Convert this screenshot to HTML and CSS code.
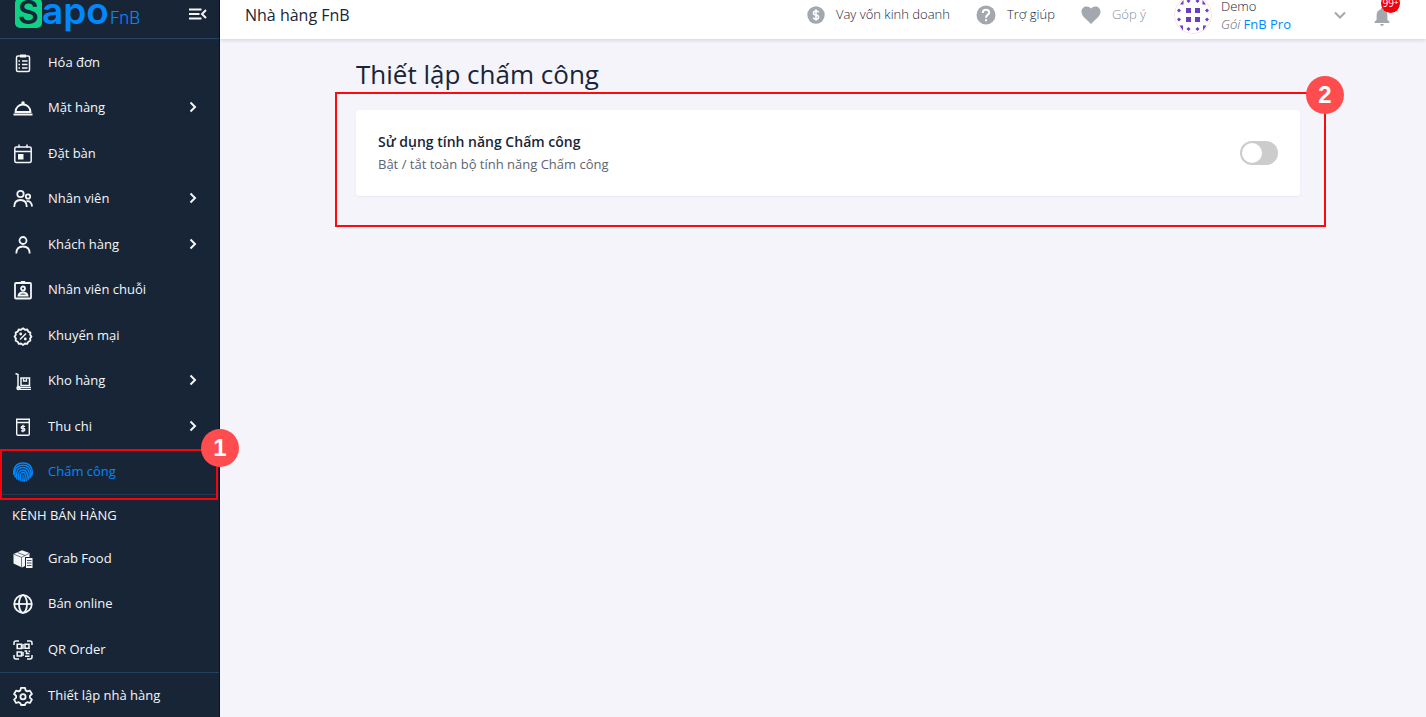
FILE: index.html
```html
<!DOCTYPE html>
<html lang="vi">

<head>
    <meta charset="UTF-8">
    <title>Thiết lập chấm công</title>
    <link rel="stylesheet" href="styles.css">
</head>

<body>

    <aside class="sidebar">
        <div class="brand">
            <a href="#" class="logo"><span class="logo-s">S</span><span class="logo-apo">apo</span><span class="logo-fnb">FnB</span></a>
            <button class="collapse" aria-label="Menu">
                <svg width="18" height="14" viewBox="0 0 18 14" fill="none" stroke="currentColor" stroke-width="2"><path d="M0 2.5h12.5M0 7h10.5M0 11.5h12.5M17 3l-4 4 4 4"/></svg>
            </button>
        </div>

        <nav class="menu">
            <a href="#" class="item">
                <svg class="icon" viewBox="0 0 20 20"><rect x="3.5" y="3" width="13" height="15.5" rx="1.5" stroke-width="1.5"/><path class="solid" d="M7 1.5h6v3H7z"/><path d="M9 8h5.500M9 11.500h5.500M9 15h5.500M5.500 8h1.500M5.500 11.500h1.500M5.500 15h1.500" stroke-width="1.300"/></svg>
                <span>Hóa đơn</span>
            </a>
            <a href="#" class="item">
                <svg class="icon" viewBox="0 0 20 20"><path d="M2.500 14a7.500 7.500 0 0 1 15 0z"/><path class="solid" d="M.5 15.500h19v2H.5z"/><circle class="solid" cx="10" cy="5" r="1.800"/></svg>
                <span>Mặt hàng</span>
                <svg class="arrow" viewBox="0 0 8 12"><path d="M1.500 1.500L6 6l-4.500 4.500"/></svg>
            </a>
            <a href="#" class="item">
                <svg class="icon" viewBox="0 0 20 20"><rect x="1.800" y="3" width="16.400" height="15.500" rx="1.500" stroke-width="1.500"/><path d="M2 7.500h16M6 .5v3M14 .5v3" stroke-width="1.500"/><path class="solid" d="M5 10h5.500v5.500H5z"/></svg>
                <span>Đặt bàn</span>
            </a>
            <a href="#" class="item">
                <svg class="icon" viewBox="0 0 20 20"><circle cx="7.500" cy="5" r="3.200"/><path d="M1.200 18c0-4.500 2.500-7 6.300-7s6.300 2.500 6.300 7"/><circle cx="15" cy="7.500" r="2.200"/><path d="M13.500 12.200c3.500-.5 5.300 1.800 5.500 5.300"/></svg>
                <span>Nhân viên</span>
                <svg class="arrow" viewBox="0 0 8 12"><path d="M1.500 1.500L6 6l-4.500 4.500"/></svg>
            </a>
            <a href="#" class="item">
                <svg class="icon" viewBox="0 0 20 20"><circle cx="10" cy="5.500" r="3.500"/><path d="M3.300 18.500c0-4.500 2.700-7 6.700-7s6.700 2.500 6.700 7"/></svg>
                <span>Khách hàng</span>
                <svg class="arrow" viewBox="0 0 8 12"><path d="M1.500 1.500L6 6l-4.500 4.500"/></svg>
            </a>
            <a href="#" class="item">
                <svg class="icon" viewBox="0 0 20 20"><rect x="2" y="3" width="16" height="15.500" rx="1"/><path class="solid" d="M7 3l1-2h4l1 2z"/><circle cx="10" cy="8.500" r="2"/><path d="M5.500 15.500c.5-2 2-3 4.500-3s4 1 4.500 3z"/></svg>
                <span>Nhân viên chuỗi</span>
            </a>
            <a href="#" class="item">
                <svg class="icon" viewBox="0 0 20 20"><path d="M10 2.300l2 1.500 2.300-.3 1 2.100 2.100 1-.3 2.200 1.400 1.700-1.400 1.900.3 2.300-2.100 1-1 2.100-2.300-.3-2 1.400-2-1.400-2.300.3-1-2.100-2.100-1 .3-2.300L1.500 10.500l1.400-1.700-.3-2.200 2.100-1 1-2.100 2.300.3z" stroke-linejoin="round"/><path d="M7 13.500l6-6" stroke-width="1.500"/><circle class="solid" cx="7.700" cy="8" r="1.400"/><circle class="solid" cx="12.300" cy="13" r="1.400"/></svg>
                <span>Khuyến mại</span>
            </a>
            <a href="#" class="item">
                <svg class="icon" viewBox="0 0 20 20"><path d="M2.500 2.500l2.500 1v13h13" stroke-width="1.500"/><rect x="8" y="7" width="8.500" height="7.500" stroke-width="1.500"/><path d="M10.500 7.500v2.500h3V7.500" stroke-width="1.300"/><circle cx="5.500" cy="17" r="1.300"/><path d="M7 18.500h11" stroke-width="1"/></svg>
                <span>Kho hàng</span>
                <svg class="arrow" viewBox="0 0 8 12"><path d="M1.500 1.500L6 6l-4.500 4.500"/></svg>
            </a>
            <a href="#" class="item">
                <svg class="icon" viewBox="0 0 20 20"><path d="M3.700 5.500v11.500q0 1.300 1.300 1.300h10q1.300 0 1.300-1.300V5.500M3.500 5.500h13M3.700 5.500V2.200h12.600v3.300" stroke-width="1.400"/><path d="M12 9.300H9.200q-1 0-1 1.100t1 1.100h1.600q1 0 1 1.200t-1 1.200H8M10 7.800v7.500" stroke-width="1.300"/></svg>
                <span>Thu chi</span>
                <svg class="arrow" viewBox="0 0 8 12"><path d="M1.500 1.500L6 6l-4.500 4.500"/></svg>
            </a>
            <a href="#" class="item active">
                <svg class="icon" viewBox="0 0 20 20" stroke-linecap="round"><path stroke-width="1.400" d="M1 12.500C-.5 5 4 1 10 1s10.500 4 9 12M2.300 15c-2-7 1.500-11.800 7.700-11.800s9 4.300 7.500 12M4 17C2.500 10 4.500 5.500 10 5.500S17.300 10 15.500 17M6 18C4.500 11.500 6 8 10 8s5.300 4.500 3.500 10.500M8 19c-1-5-1-8.500 2-8.500s2.500 4 1.500 8.500M10 13v6"/></svg>
                <span>Chấm công</span>
                <i class="mark"></i>
                <b class="step step-one">1</b>
            </a>
            <h2 class="group">KÊNH BÁN HÀNG</h2>
            <a href="#" class="item">
                <svg class="icon" viewBox="0 0 20 20"><path class="solid" d="M.5 5L9 1.200 16.500 4v4H12v9l-3 1.500-8.500-4z"/><path d="M1 5.300l7.500 3 7.500-3.800M8.500 8.500v10M4.500 3.500L12 6.500" stroke="#182537" stroke-width=".6"/><path class="solid" d="M13 9h6.500v10H13z"/><path d="M14 11.500h4.500M14 14h4.500M14 16.500h4.500" stroke="#182537" stroke-width=".8"/></svg>
                <span>Grab Food</span>
            </a>
            <a href="#" class="item">
                <svg class="icon" viewBox="0 0 20 20"><circle cx="10" cy="10" r="8.800"/><ellipse cx="10" cy="10" rx="4" ry="8.800"/><path d="M1.200 10h17.600"/></svg>
                <span>Bán online</span>
            </a>
            <a href="#" class="item">
                <svg class="icon" viewBox="0 0 20 20"><path d="M1 5V3q0-2 2-2h3M14 1h3q2 0 2 2v2M1 15v2q0 2 2 2h3M14 19h3q2 0 2-2v-2" stroke-width="1.500"/><path d="M4.200 4.200h4.300v4.300H4.200zM12 4.200h4v4h-4zM4.200 12h4.300v4H4.200z" stroke-width="1.600"/><path d="M11.500 11h2v2.500h3M12 16.200h4.500M16.300 10.500v1.500M10 4v5M10 12v4" stroke-width="1.500"/></svg>
                <span>QR Order</span>
            </a>
            <a href="#" class="item settings">
                <svg class="icon" viewBox="0 0 20 20"><path stroke-linejoin="round" d="M8 1.800h4l.6 2.600 1.700 1 2.600-.8 2 3.400-2 1.900v1.800l2 1.900-2 3.400-2.600-.8-1.700 1-.6 1.800H8l-.6-1.800-1.700-1-2.600.8-2-3.400 2-1.900V9.900l-2-1.900 2-3.400 2.600.8 1.700-1z"/><circle cx="10" cy="10.700" r="2.600"/></svg>
                <span>Thiết lập nhà hàng</span>
            </a>
        </nav>
    </aside>

    <div class="page">
        <header class="topbar">
            <div class="store">Nhà hàng FnB</div>
            <a href="#" class="link">
                <svg width="18" height="18" viewBox="0 0 18 18"><circle cx="9" cy="9" r="8.700" fill="#a3a8af"/><path d="M11.800 6.300Q11 5 9 5 6.500 5 6.500 6.900T9 9t2.600 2.100T9 13q-2 0-2.900-1.300M9 3.300v11.400" fill="none" stroke="#fff" stroke-width="1.600"/></svg>
                <span>Vay vốn kinh doanh</span>
            </a>
            <a href="#" class="link">
                <svg width="20" height="20" viewBox="0 0 20 20"><circle cx="10" cy="10" r="9.500" fill="#a3a8af"/><path d="M6.800 8q0-3.300 3.200-3.300T13.200 7.500q0 1.200-1.600 2.400T10 12.700" fill="none" stroke="#fff" stroke-width="2"/><path d="M9 14.200h2v2H9z" fill="#fff"/></svg>
                <span>Trợ giúp</span>
            </a>
            <a href="#" class="link muted">
                <svg width="20" height="18" viewBox="0 0 20 18"><path d="M10 18L8.500 16.600C3.500 12 .5 9.300.5 5.600.5 2.600 2.800.5 5.600.5 7.300.5 9 1.300 10 2.600 11 1.300 12.700.5 14.400.5c2.800 0 5.100 2.100 5.100 5.100 0 3.700-3 6.400-8 11z" fill="#a3a8af"/></svg>
                <span>Góp ý</span>
            </a>
            <div class="account">
                <svg class="avatar" viewBox="0 0 38 38" fill="#6a3fbf">
                    <circle cx="19" cy="19" r="18.500" fill="#fff" stroke="#fbe3e6"/>
                    <path d="M12 12h5v5h-5zM21 12h5v5h-5zM12 21h5v5h-5zM21 21h5v5h-5z"/>
                    <path d="M5 12.500l2 2-2 2-2-2zM33 12.500l2 2-2 2-2-2zM5 21.500l2 2-2 2-2-2zM33 21.500l2 2-2 2-2-2zM14.500 3l2 2-2 2-2-2zM23.500 3l2 2-2 2-2-2zM14.500 31l2 2-2 2-2-2zM23.500 31l2 2-2 2-2-2z"/>
                    <path d="M6 8.500L9.500 4v4.500zM32 8.500L28.500 4v4.500zM5.500 29.500H9v5zM32.500 29.500H29v5z"/>
                </svg>
                <div class="who">
                    <div>Demo</div>
                    <div><em>Gói</em> <a href="#">FnB Pro</a></div>
                </div>
                <svg class="caret" width="12" height="8" viewBox="0 0 12 8"><path d="M1 1.500l5 5 5-5" fill="none" stroke="#a3a8af" stroke-width="2"/></svg>
            </div>
            <button class="bell" aria-label="Thông báo">
                <svg width="16" height="18" viewBox="0 0 16 18" fill="#a3a8af"><path d="M8 0c.9 0 1.400.6 1.400 1.600 2.600.7 4 2.800 4 5.600v4.500l2 2V15H.6v-1.300l2-2V7.200c0-2.800 1.400-4.900 4-5.600C6.600.6 7.100 0 8 0zM6.200 16h3.600q-.3 2-1.800 2t-1.800-2z"/></svg>
                <span class="count">99<sup>+</sup></span>
            </button>
        </header>

        <main class="content">
            <h1>Thiết lập chấm công</h1>
            <section class="frame">
                <div class="card">
                    <label for="timekeeping">
                        <strong>Sử dụng tính năng Chấm công</strong>
                        <small>Bật / tắt toàn bộ tính năng Chấm công</small>
                    </label>
                    <input type="checkbox" id="timekeeping" class="switch">
                </div>
                <b class="step step-two">2</b>
            </section>
        </main>
    </div>

</body>

</html>
```
FILE: styles.css
```css
* {
    box-sizing: border-box;
}

body {
    margin: 0;
    display: flex;
    min-height: 100vh;
    font-family: "Open Sans", "Noto Sans", sans-serif;
    font-size: 13px;
    color: #182537;
    background-color: #f4f4fa;
}

a {
    color: inherit;
    text-decoration: none;
}

button {
    padding: 0;
    border: none;
    background: none;
    color: inherit;
    cursor: pointer;
}

svg {
    display: block;
    flex: none;
}

/* Sidebar */
.sidebar {
    flex: none;
    width: 220px;
    display: flex;
    flex-direction: column;
    color: #f4f6f8;
    background-color: #182537;
    border-right: 1px solid #0a1224;
}

.brand {
    display: flex;
    align-items: center;
    justify-content: space-between;
    height: 39px;
    padding: 0 12px 10px 15px;
    border-bottom: 1px solid #2a4365;
}

.logo {
    display: flex;
    align-items: baseline;
    font-family: Inter, sans-serif;
    color: #0088ff;
    line-height: 30px;
}

.logo-s {
    width: 27px;
    border-radius: 5px;
    text-align: center;
    font-size: 32px;
    font-weight: 600;
    line-height: 30px;
    color: #182537;
    background-color: #0fd186;
}

.logo-apo {
    font-size: 37px;
    font-weight: 600;
}

.logo-fnb {
    margin-left: 1px;
    font-size: 17px;
    font-weight: 300;
}

.menu {
    flex: 1;
    display: flex;
    flex-direction: column;
}

.item {
    position: relative;
    flex: 1 0 32px;
    display: flex;
    align-items: center;
    gap: 15px;
    padding: 0 22px 0 13px;
}

.icon {
    width: 20px;
    height: 20px;
    margin-top: 2px;
    fill: none;
    stroke: currentColor;
    stroke-width: 1.8;
}

.icon .solid {
    fill: currentColor;
    stroke: none;
}

.arrow {
    width: 8px;
    height: 12px;
    margin-left: auto;
    fill: none;
    stroke: currentColor;
    stroke-width: 2;
}

.active {
    color: #0088ff;
}

.group {
    margin: 0;
    padding-left: 12px;
    border-top: 1px solid #26384f;
    font-size: 13px;
    font-weight: 400;
    line-height: 40px;
}

.settings {
    border-top: 1px solid #24405f;
}

/* Numbered guide marks */
.mark {
    position: absolute;
    inset: 0 1px -6px 0;
    border: 2px solid #f5040c;
}

.step {
    position: absolute;
    z-index: 1;
    width: 38px;
    height: 38px;
    border-radius: 50%;
    text-align: center;
    font: bold 24px/38px "Liberation Sans", sans-serif;
    color: #fff;
    background-color: #ff4d4f;
}

.step-one {
    top: -20px;
    right: -20px;
}

.step-two {
    top: -18px;
    right: -20px;
}

/* Top bar */
.page {
    flex: 1;
    min-width: 0;
}

.topbar {
    display: flex;
    align-items: center;
    height: 39px;
    padding: 0 36px 9px 25px;
    background-color: #fff;
    box-shadow: 0 1px 4px rgba(0, 0, 0, 0.15);
}

.store {
    margin-right: auto;
    font-size: 16px;
}

.link {
    display: flex;
    align-items: center;
    gap: 11px;
    margin-right: 28px;
    font-weight: 300;
    white-space: nowrap;
}

.link span {
    padding-bottom: 2px;
}

.link + .link {
    margin-left: -2px;
}

.muted {
    color: #8a9099;
}

.account {
    display: flex;
    align-items: center;
    font-weight: 300;
}

.avatar {
    width: 38px;
    height: 38px;
    margin-right: 9px;
}

.who {
    line-height: 18px;
}

.who em {
    color: #5f6670;
}

.who a {
    font-weight: 400;
    color: #0088ff;
}

.caret {
    margin: 0 28px 0 43px;
}

.bell {
    position: relative;
    margin-top: 4px;
}

.count {
    position: absolute;
    top: -14px;
    left: 7px;
    width: 19px;
    height: 19px;
    border-radius: 50%;
    font: 10px/19px "Open Sans", sans-serif;
    white-space: nowrap;
    color: #fff;
    background-color: #f5000a;
}

.count sup {
    font-size: 8px;
    line-height: 0;
    vertical-align: 2px;
}

/* Content */
.content {
    padding: 17px 100px 0 115px;
}

h1 {
    margin: 0 0 0 21px;
    font-size: 26px;
    font-weight: 500;
    line-height: 36px;
}

.frame {
    position: relative;
    padding: 16px 24px 29px 19px;
    border: 2px solid #ff0a0a;
}

.card {
    display: flex;
    align-items: center;
    justify-content: space-between;
    padding: 20px 22px;
    border-radius: 3px;
    background-color: #fff;
    box-shadow: 0 1px 2px rgba(0, 0, 0, 0.05);
}

.card strong,
.card small {
    display: block;
    line-height: 23px;
}

.card strong {
    font-size: 14px;
    font-weight: 600;
}

.card small {
    font-size: 13px;
    color: #5d6470;
}

.switch {
    appearance: none;
    width: 38px;
    height: 24px;
    margin: 0;
    padding: 2px;
    border-radius: 12px;
    background-color: #ccc;
    cursor: pointer;
}

.switch::before {
    content: "";
    display: block;
    width: 20px;
    height: 20px;
    border-radius: 50%;
    background-color: #fff;
}

.switch:checked {
    background-color: #0088ff;
}

.switch:checked::before {
    margin-left: auto;
}
```
